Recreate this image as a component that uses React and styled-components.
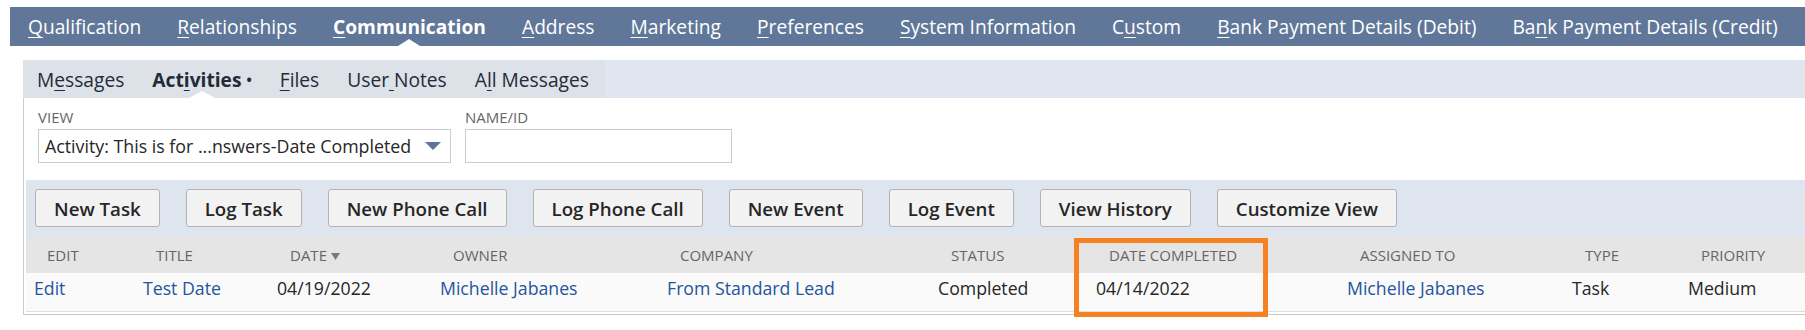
import React from 'react'
import styled, { createGlobalStyle } from 'styled-components'

const GlobalStyle = createGlobalStyle`
   html, body {
      margin: 0;
      padding: 0;
      background: #fff;
      overflow: hidden;
   }
   body {
      font-family: "Open Sans", "Liberation Sans", sans-serif;
      color: #262626;
   }
`

const MAIN_TABS = [
   { label: 'Qualification', key: 0 },
   { label: 'Relationships', key: 0 },
   { label: 'Communication', key: 0, active: true },
   { label: 'Address', key: 0 },
   { label: 'Marketing', key: 0 },
   { label: 'Preferences', key: 0 },
   { label: 'System Information', key: 0 },
   { label: 'Custom', key: 1 },
   { label: 'Bank Payment Details (Debit)', key: 0 },
   { label: 'Bank Payment Details (Credit)', key: 2 },
]

const SUB_TABS = [
   { label: 'Messages', key: 1 },
   { label: 'Activities', key: 3, active: true },
   { label: 'Files', key: 0 },
   { label: 'User Notes', key: 4 },
   { label: 'All Messages', key: 1 },
]

const BUTTONS = [
   'New Task',
   'Log Task',
   'New Phone Call',
   'Log Phone Call',
   'New Event',
   'Log Event',
   'View History',
   'Customize View',
]

const COLUMNS = [
   { title: 'EDIT', width: 109 },
   { title: 'TITLE', width: 134 },
   { title: 'DATE', width: 163, sorted: true },
   { title: 'OWNER', width: 227 },
   { title: 'COMPANY', width: 271 },
   { title: 'STATUS', width: 158 },
   { title: 'DATE COMPLETED', width: 251, highlight: true },
   { title: 'ASSIGNED TO', width: 225 },
   { title: 'TYPE', width: 116 },
   { title: 'PRIORITY' },
]

const ROW = [
   { text: 'Edit', link: true },
   { text: 'Test Date', link: true },
   { text: '04/19/2022' },
   { text: 'Michelle Jabanes', link: true },
   { text: 'From Standard Lead', link: true },
   { text: 'Completed' },
   { text: '04/14/2022' },
   { text: 'Michelle Jabanes', link: true },
   { text: 'Task' },
   { text: 'Medium' },
]

const AccessLabel = ({ label, at }) => {
   const ch = label[at] === ' ' ? '\u00a0' : label[at]
   return (
      <>
         {label.slice(0, at)}
         <Key>{ch}</Key>
         {label.slice(at + 1)}
      </>
   )
}

export default function App() {
   return (
      <>
         <GlobalStyle />
         <Page>
            <MainTabs>
               {MAIN_TABS.map((t) => (
                  <MainTab key={t.label} $active={t.active}>
                     <AccessLabel label={t.label} at={t.key} />
                  </MainTab>
               ))}
            </MainTabs>

            <Section>
               <SubTabBar>
                  <SubTabStrip>
                     {SUB_TABS.map((t) => (
                        <SubTab key={t.label} $active={t.active}>
                           <AccessLabel label={t.label} at={t.key} />
                           {t.active && <Dot>•</Dot>}
                        </SubTab>
                     ))}
                  </SubTabStrip>
               </SubTabBar>

               <Panel>
                  <Filters>
                     <Field>
                        <FieldLabel>View</FieldLabel>
                        <Select>
                           <span>Activity: This is for ...nswers-Date Completed</span>
                           <svg width="16" height="8" viewBox="0 0 16 8">
                              <path d="M0 0 H16 L8 8 Z" fill="#5f7698" />
                           </svg>
                        </Select>
                     </Field>
                     <Field>
                        <FieldLabel>Name/ID</FieldLabel>
                        <TextInput />
                     </Field>
                  </Filters>

                  <ButtonBar>
                     {BUTTONS.map((b) => (
                        <Button key={b}>{b}</Button>
                     ))}
                  </ButtonBar>

                  <Table>
                     <colgroup>
                        {COLUMNS.map((c) => (
                           <col key={c.title} style={c.width ? { width: c.width } : undefined} />
                        ))}
                     </colgroup>
                     <thead>
                        <HeadRow>
                           {COLUMNS.map((c) => (
                              <HeadCell key={c.title}>
                                 {c.title}
                                 {c.sorted && (
                                    <SortIcon width="9" height="7" viewBox="0 0 9 7">
                                       <path d="M0 0 H9 L4.5 7 Z" fill="#7a7a7a" />
                                    </SortIcon>
                                 )}
                                 {c.highlight && <Highlight />}
                              </HeadCell>
                           ))}
                        </HeadRow>
                     </thead>
                     <tbody>
                        <DataRow>
                           {ROW.map((cell, i) => (
                              <Cell key={i} $link={cell.link}>
                                 {cell.text}
                              </Cell>
                           ))}
                        </DataRow>
                     </tbody>
                  </Table>
               </Panel>
            </Section>
         </Page>
      </>
   )
}

const Page = styled.div`
   padding: 7px 0 0 10px;
   min-height: 330px;
   box-sizing: border-box;
`

const Key = styled.u`
   text-decoration: underline;
   text-decoration-thickness: 1px;
   text-underline-offset: 3px;
`

const MainTabs = styled.nav`
   display: flex;
   height: 39px;
   background: #607799;
   white-space: nowrap;
`

const MainTab = styled.div`
   position: relative;
   display: flex;
   align-items: center;
   padding: 0 18px;
   color: #fff;
   font-size: 19.2px;
   font-weight: ${(p) => (p.$active ? 700 : 400)};
   ${(p) =>
      p.$active &&
      `
      &::after {
         content: '';
         position: absolute;
         bottom: 0;
         left: 50%;
         transform: translateX(-50%);
         border-left: 11px solid transparent;
         border-right: 11px solid transparent;
         border-bottom: 7px solid #fff;
      }
   `}
`

const Section = styled.div`
   margin: 14px 0 0 13px;
`

const SubTabBar = styled.div`
   display: flex;
   height: 38px;
   background: #e0e6ef;
`

const SubTabStrip = styled.div`
   display: flex;
   background: #dde1e8;
   padding-right: 2px;
`

const SubTab = styled.div`
   position: relative;
   display: flex;
   align-items: center;
   padding: 0 14px;
   font-size: 19.2px;
   color: #232b38;
   font-weight: ${(p) => (p.$active ? 700 : 400)};
   white-space: nowrap;
   ${(p) =>
      p.$active &&
      `
      &::after {
         content: '';
         position: absolute;
         bottom: 0;
         left: 50%;
         transform: translateX(-50%);
         border-left: 13px solid transparent;
         border-right: 13px solid transparent;
         border-bottom: 7px solid #fff;
      }
   `}
`

const Dot = styled.span`
   font-size: 14px;
   margin-left: 5px;
`

const Panel = styled.div`
   border-left: 1px solid #cccccc;
   border-bottom: 1px solid #c8c8c8;
   padding: 0 0 2px 2px;
`

const Filters = styled.div`
   display: flex;
   gap: 14px;
   height: 82px;
   box-sizing: border-box;
   padding: 9px 0 0 12px;
`

const Field = styled.div`
   display: flex;
   flex-direction: column;
   gap: 2px;
`

const FieldLabel = styled.label`
   font-size: 15px;
   line-height: 20px;
   color: #666666;
   text-transform: uppercase;
`

const Select = styled.div`
   display: flex;
   align-items: center;
   justify-content: space-between;
   width: 413px;
   height: 34px;
   box-sizing: border-box;
   border: 1px solid #cccccc;
   padding: 0 9px 0 6px;
   font-size: 17.8px;
   color: #262626;
   background: #fff;
   white-space: nowrap;
`

const TextInput = styled.div`
   width: 267px;
   height: 34px;
   box-sizing: border-box;
   border: 1px solid #cccccc;
   background: #fff;
`

const ButtonBar = styled.div`
   display: flex;
   gap: 26px;
   height: 56px;
   box-sizing: border-box;
   padding: 9px 0 0 9px;
   background: #dfe5ee;
`

const Button = styled.button`
   height: 38px;
   padding: 0 18px;
   border: 1px solid #b3b3b3;
   border-radius: 3px;
   background: #f2f2f2;
   color: #262626;
   font-family: inherit;
   font-size: 18.7px;
   font-weight: 600;
   white-space: nowrap;
`

const Table = styled.table`
   width: 100%;
   table-layout: fixed;
   border-collapse: collapse;
`

const HeadRow = styled.tr`
   height: 37px;
`

const HeadCell = styled.th`
   position: relative;
   padding: 0 0 0 21px;
   background: #e5e5e5;
   color: #666666;
   font-size: 15px;
   font-weight: 400;
   text-align: left;
   white-space: nowrap;
`

const SortIcon = styled.svg`
   margin-left: 4px;
   vertical-align: 1px;
`

const Highlight = styled.span`
   position: absolute;
   left: -14px;
   top: 2px;
   width: 194px;
   height: 79px;
   box-sizing: border-box;
   border: 5px solid #f58220;
   pointer-events: none;
`

const DataRow = styled.tr`
   height: 38px;
`

const Cell = styled.td`
   vertical-align: top;
   padding: 3px 0 0 8px;
   background: #fafafa;
   border-bottom: 1px solid #dedede;
   font-size: 17.7px;
   color: ${(p) => (p.$link ? '#24559a' : '#262626')};
   white-space: nowrap;
`
